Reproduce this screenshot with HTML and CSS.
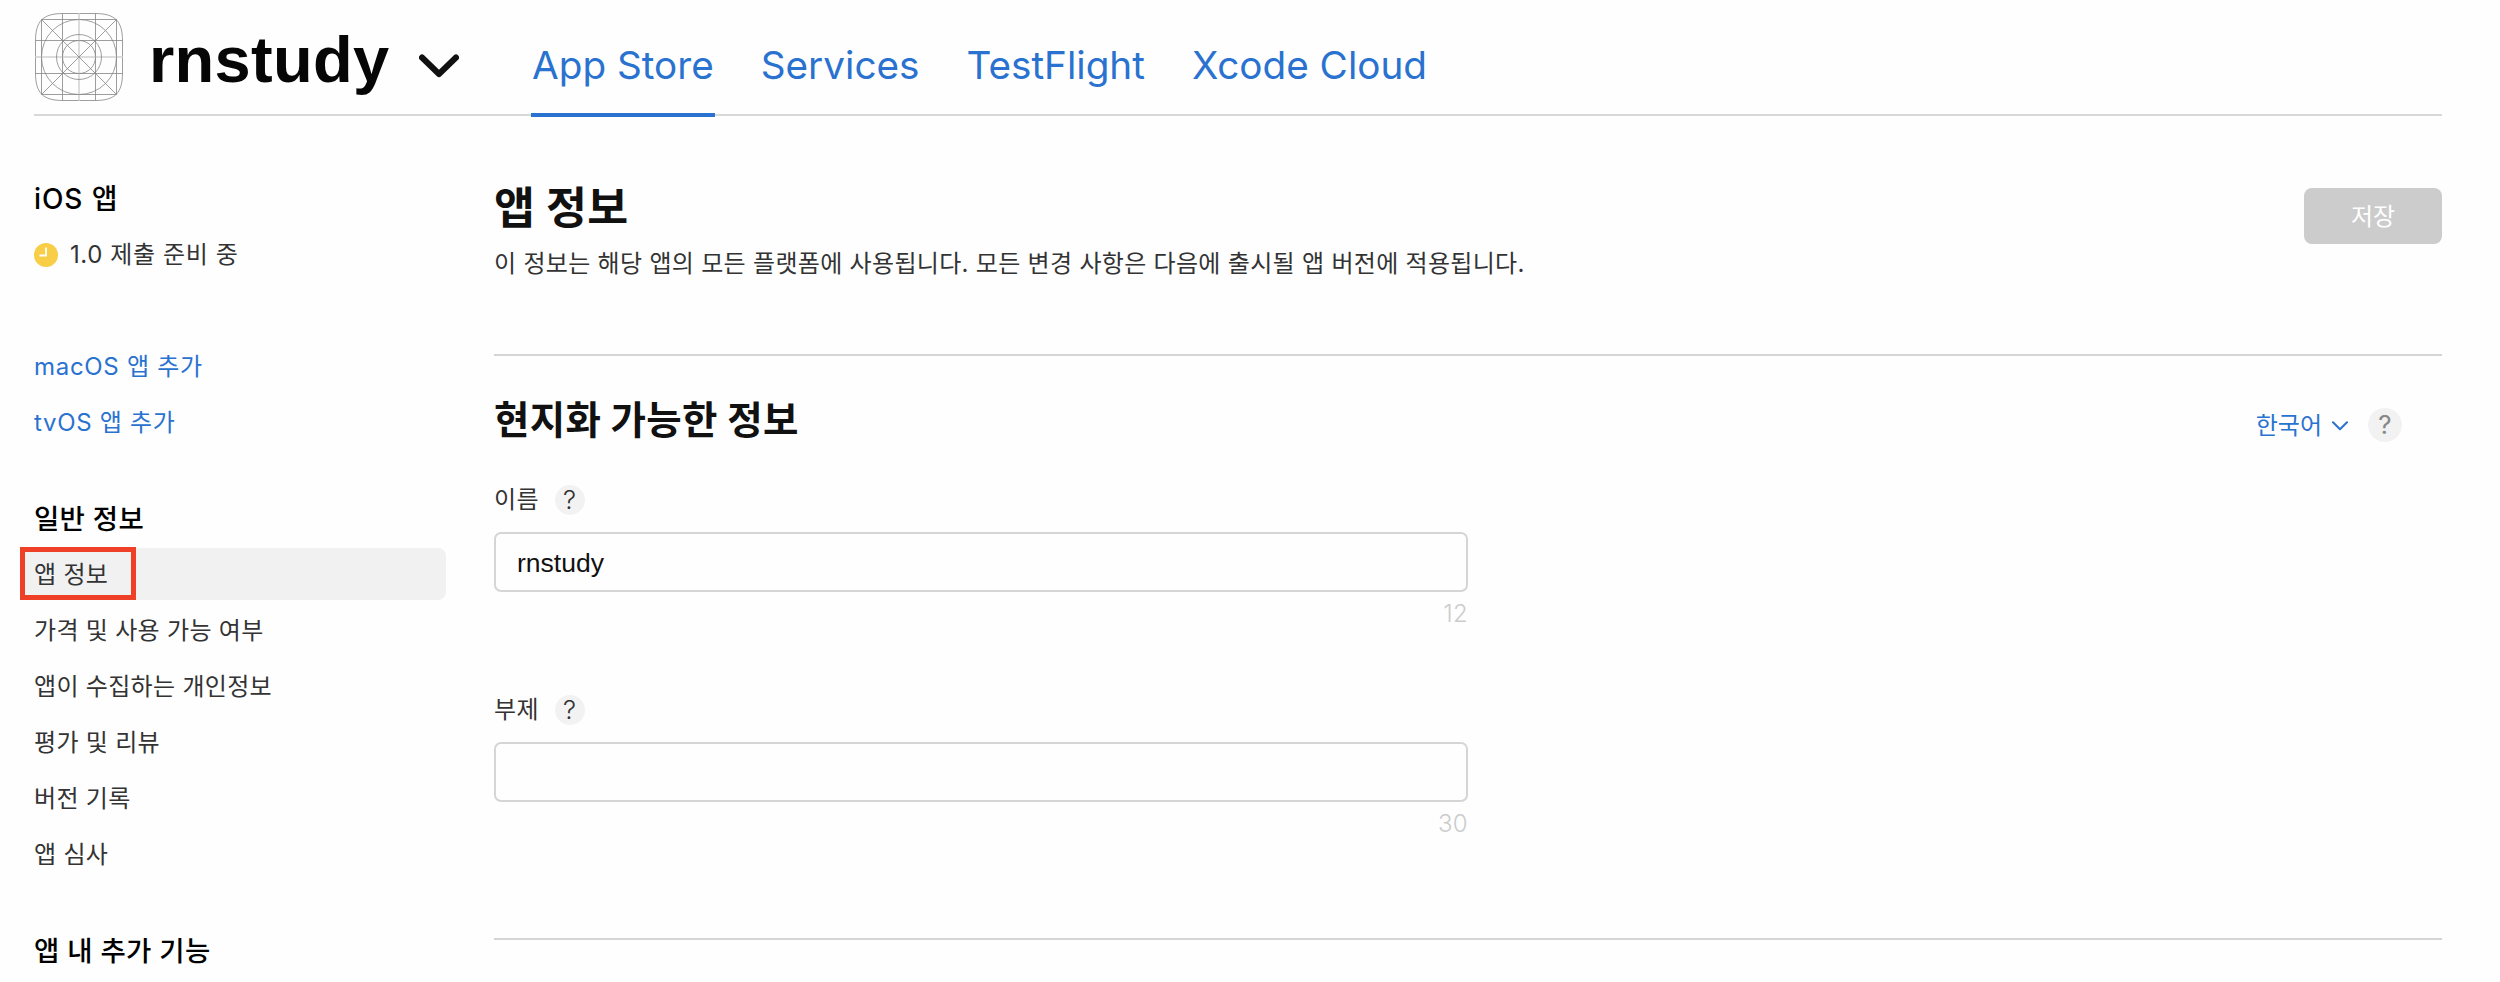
FILE: index.html
```html
<!DOCTYPE html>
<html lang="ko">
<head>
<meta charset="utf-8">
<title>rnstudy</title>
<link rel="stylesheet" href="styles.css">
</head>
<body>
<header class="topbar">
  <svg class="app-icon" viewBox="0 0 88 88" fill="none" stroke="#858585" stroke-width=".8">
    <path d="M.5 28C.5 8 8 .5 28 .5H60C80 .5 87.500 8 87.500 28V60C87.500 80 80 87.500 60 87.500H28C8 87.500 .5 80 .5 60Z"/>
    <path d="M6.500 6.500V81.500M27.500 .5V87.500M60.500 .5V87.500M81.500 6.500V81.500M6.500 6.500H81.500M.5 27.500H87.500M.5 60.500H87.500M6.500 81.500H81.500"/>
    <path d="M44 .5V87.500M.5 44H87.500" stroke="#dcdcdc" stroke-width="2"/>
    <path d="M6.500 6.500L81.500 81.500M81.500 6.500L6.500 81.500"/>
    <circle cx="44" cy="44" r="37.500"/><circle cx="44" cy="44" r="22.500"/><circle cx="44" cy="44" r="16.500"/>
  </svg>
  <h1 class="app-name">rnstudy</h1>
  <svg class="app-chevron" viewBox="0 0 40 24" fill="none" stroke="#111" stroke-width="6" stroke-linecap="round" stroke-linejoin="round"><path d="M3 3.500L20 20L37 3.500"/></svg>
  <nav class="tabs">
    <a class="tab tab-active">App Store</a>
    <a class="tab">Services</a>
    <a class="tab">TestFlight</a>
    <a class="tab">Xcode Cloud</a>
  </nav>
</header>
<div class="layout">
  <aside class="sidebar">
    <h2 class="side-title side-title-os">iOS 앱</h2>
    <a class="side-item status">
      <svg class="clock" viewBox="0 0 24 24"><circle cx="12" cy="12" r="12" fill="#f7ce46"/><path d="M12 4.500V12.500H5.500" fill="none" stroke="#fff" stroke-width="1.800"/></svg>
      <span>1.0 제출 준비 중</span>
    </a>
    <div class="side-group platforms">
      <a class="side-item link">macOS 앱 추가</a>
      <a class="side-item link">tvOS 앱 추가</a>
    </div>
    <div class="side-group">
      <h2 class="side-title">일반 정보</h2>
      <a class="side-item selected">앱 정보<span class="marker"></span></a>
      <a class="side-item">가격 및 사용 가능 여부</a>
      <a class="side-item">앱이 수집하는 개인정보</a>
      <a class="side-item">평가 및 리뷰</a>
      <a class="side-item">버전 기록</a>
      <a class="side-item">앱 심사</a>
    </div>
    <div class="side-group">
      <h2 class="side-title">앱 내 추가 기능</h2>
    </div>
  </aside>
  <main class="content">
    <div class="page-head">
      <div>
        <h1 class="page-title">앱 정보</h1>
        <p class="page-desc">이 정보는 해당 앱의 모든 플랫폼에 사용됩니다. 모든 변경 사항은 다음에 출시될 앱 버전에 적용됩니다.</p>
      </div>
      <button class="save">저장</button>
    </div>
    <section class="section">
      <div class="section-head">
        <h2 class="section-title">현지화 가능한 정보</h2>
        <div class="locale">
          <span class="locale-name">한국어</span>
          <svg class="locale-chevron" viewBox="0 0 16 10" fill="none" stroke="#2a72cf" stroke-width="2" stroke-linecap="round" stroke-linejoin="round"><path d="M1 1.300L8 8.300L15 1.300"/></svg>
          <span class="help help-large">?</span>
        </div>
      </div>
      <div class="field">
        <div class="label"><span>이름</span><span class="help">?</span></div>
        <div class="input">rnstudy</div>
        <div class="count">12</div>
      </div>
      <div class="field">
        <div class="label"><span>부제</span><span class="help">?</span></div>
        <div class="input"></div>
        <div class="count">30</div>
      </div>
    </section>
  </main>
</div>
</body>
</html>
```
FILE: styles.css
```css
* { box-sizing: border-box; }
body {
  margin: 0;
  height: 982px;
  overflow: hidden;
  background: #fefefe;
  color: #333;
  font: 24px/58px Inter, "Noto Sans CJK KR", sans-serif;
  letter-spacing: .3px;
  white-space: nowrap;
}
h1, h2, p { margin: 0; }
.topbar {
  display: flex;
  height: 116px;
  margin: 0 58px 0 34px;
  border-bottom: 2px solid #d8d8d8;
}
.app-icon { width: 88px; height: 88px; margin: 13px 0 0 1px; }
.app-name {
  width: 239px;
  margin-left: 26px;
  color: #060606;
  font: bold 65px/119px "Liberation Sans", sans-serif;
}
.app-chevron { width: 40px; height: 24px; margin: 54px 0 0 31px; }
.tabs { display: flex; gap: 45px; height: 117px; margin-left: 72px; letter-spacing: 0; }
.tab {
  height: 117px;
  padding: 0 1px;
  color: #2a72cf;
  font-size: 38.700px;
  line-height: 130px;
}
.tab-active { border-bottom: 4px solid #2a72cf; }
.layout { display: flex; }
.sidebar { width: 446px; padding-top: 54px; }
.side-title {
  height: 56px;
  padding-left: 34px;
  color: #000;
  font-size: 27.500px;
  font-weight: 500;
  line-height: 59px;
}
.side-title-os { font-size: 28px; letter-spacing: .9px; }
.side-item { display: block; height: 56px; padding-left: 34px; }
.status { display: flex; align-items: center; gap: 12px; line-height: 56px; padding-top: 1px; letter-spacing: .6px; }
.clock { width: 24px; height: 24px; }
.platforms { padding-top: 16px; }
.side-group { margin-top: 40px; }
.link { color: #2a72cf; letter-spacing: .7px; }
.selected {
  position: relative;
  height: 52px;
  margin: 2px 0 2px 22px;
  padding-left: 12px;
  border-radius: 8px;
  background: #f1f1f1;
  line-height: 54px;
}
.marker {
  position: absolute;
  left: -2px;
  top: -1px;
  width: 116px;
  height: 53px;
  border: 5px solid #ee4026;
}
.content { width: 1948px; margin-left: 48px; }
.page-head {
  display: flex;
  justify-content: space-between;
  height: 240px;
  padding-top: 62px;
  border-bottom: 2px solid #d5d5d5;
}
.page-title { color: #111; font-size: 44.500px; font-weight: 700; line-height: 61px; height: 60px; }
.page-desc { line-height: 52px; }
.save {
  width: 138px;
  height: 56px;
  margin-top: 10px;
  padding: 0;
  border: 0;
  border-radius: 8px;
  background: #ccc;
  color: #fff;
  font: inherit;
}
.section { height: 584px; border-bottom: 2px solid #d5d5d5; }
.section-head {
  display: flex;
  justify-content: space-between;
  height: 114px;
  padding: 34px 40px 0 0;
}
.section-title { color: #111; font-size: 38.500px; font-weight: 700; line-height: 60px; }
.locale { display: flex; align-items: center; height: 70px; color: #2a72cf; letter-spacing: 0; }
.locale-name { padding-top: 2px; }
.locale-chevron { width: 16px; height: 10px; margin: 1px 20px 0 10px; }
.help {
  width: 30px;
  height: 30px;
  border-radius: 50%;
  background: #f2f2f2;
  color: #333;
  font-size: 26px;
  font-weight: 300;
  line-height: 30px;
  text-align: center;
}
.help-large { width: 34px; height: 34px; color: #888; font-weight: 400; line-height: 34px; }
.field { height: 210px; }
.label { display: flex; align-items: center; gap: 16px; height: 62px; padding-bottom: 3px; }
.input {
  width: 974px;
  height: 60px;
  padding-left: 21px;
  border: 2px solid #d5d5d5;
  border-radius: 7px;
  color: #111;
  font: 26.500px/58px "Liberation Sans", sans-serif;
  letter-spacing: 0;
}
.count {
  width: 974px;
  height: 44px;
  color: #ccc;
  font-weight: 300;
  line-height: 44px;
  text-align: right;
}
```
